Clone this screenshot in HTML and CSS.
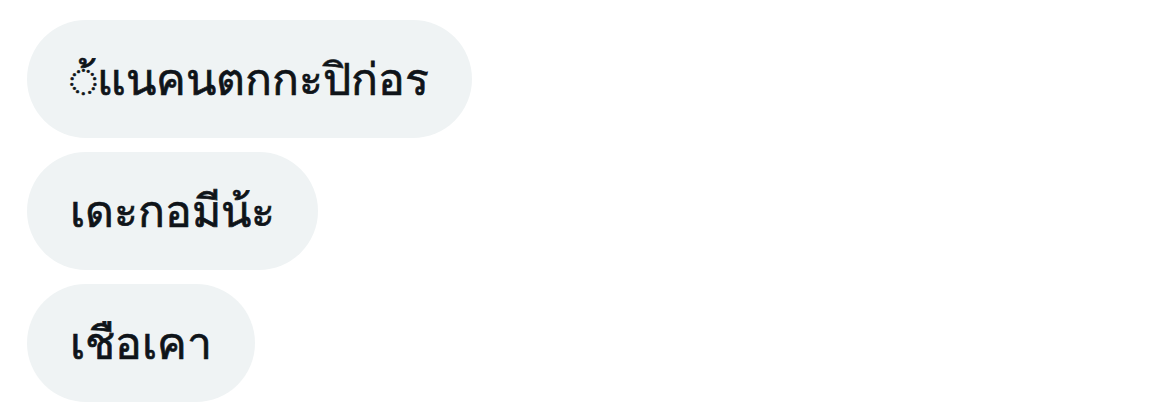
FILE: index.html
```html
<!DOCTYPE html>
<html lang="th">
<head>
<meta charset="utf-8">
<link rel="stylesheet" href="styles.css">
</head>
<body>
<div class="chat">
  <div class="bubble">&#x25CC;&#x0E49;แนคนตกกะปิก่อร</div>
  <div class="bubble">เดะกอมีน้ะ</div>
  <div class="bubble">เชือเคา</div>
</div>
</body>
</html>
```
FILE: styles.css
```css
html, body {
  margin: 0;
  padding: 0;
  background: #ffffff;
}
.chat {
  display: flex;
  flex-direction: column;
  align-items: flex-start;
  gap: 14px;
  padding: 20px 0 0 27px;
}
.bubble {
  background: #eff3f4;
  border-radius: 60px;
  height: 118px;
  box-sizing: border-box;
  padding: 0 43px;
  display: flex;
  align-items: center;
  font-family: "Noto Sans", "DejaVu Sans", sans-serif;
  font-size: 44.5px;
  font-weight: 400;
  -webkit-text-stroke: 0.7px #0f1419;
  color: #0f1419;
}
```
